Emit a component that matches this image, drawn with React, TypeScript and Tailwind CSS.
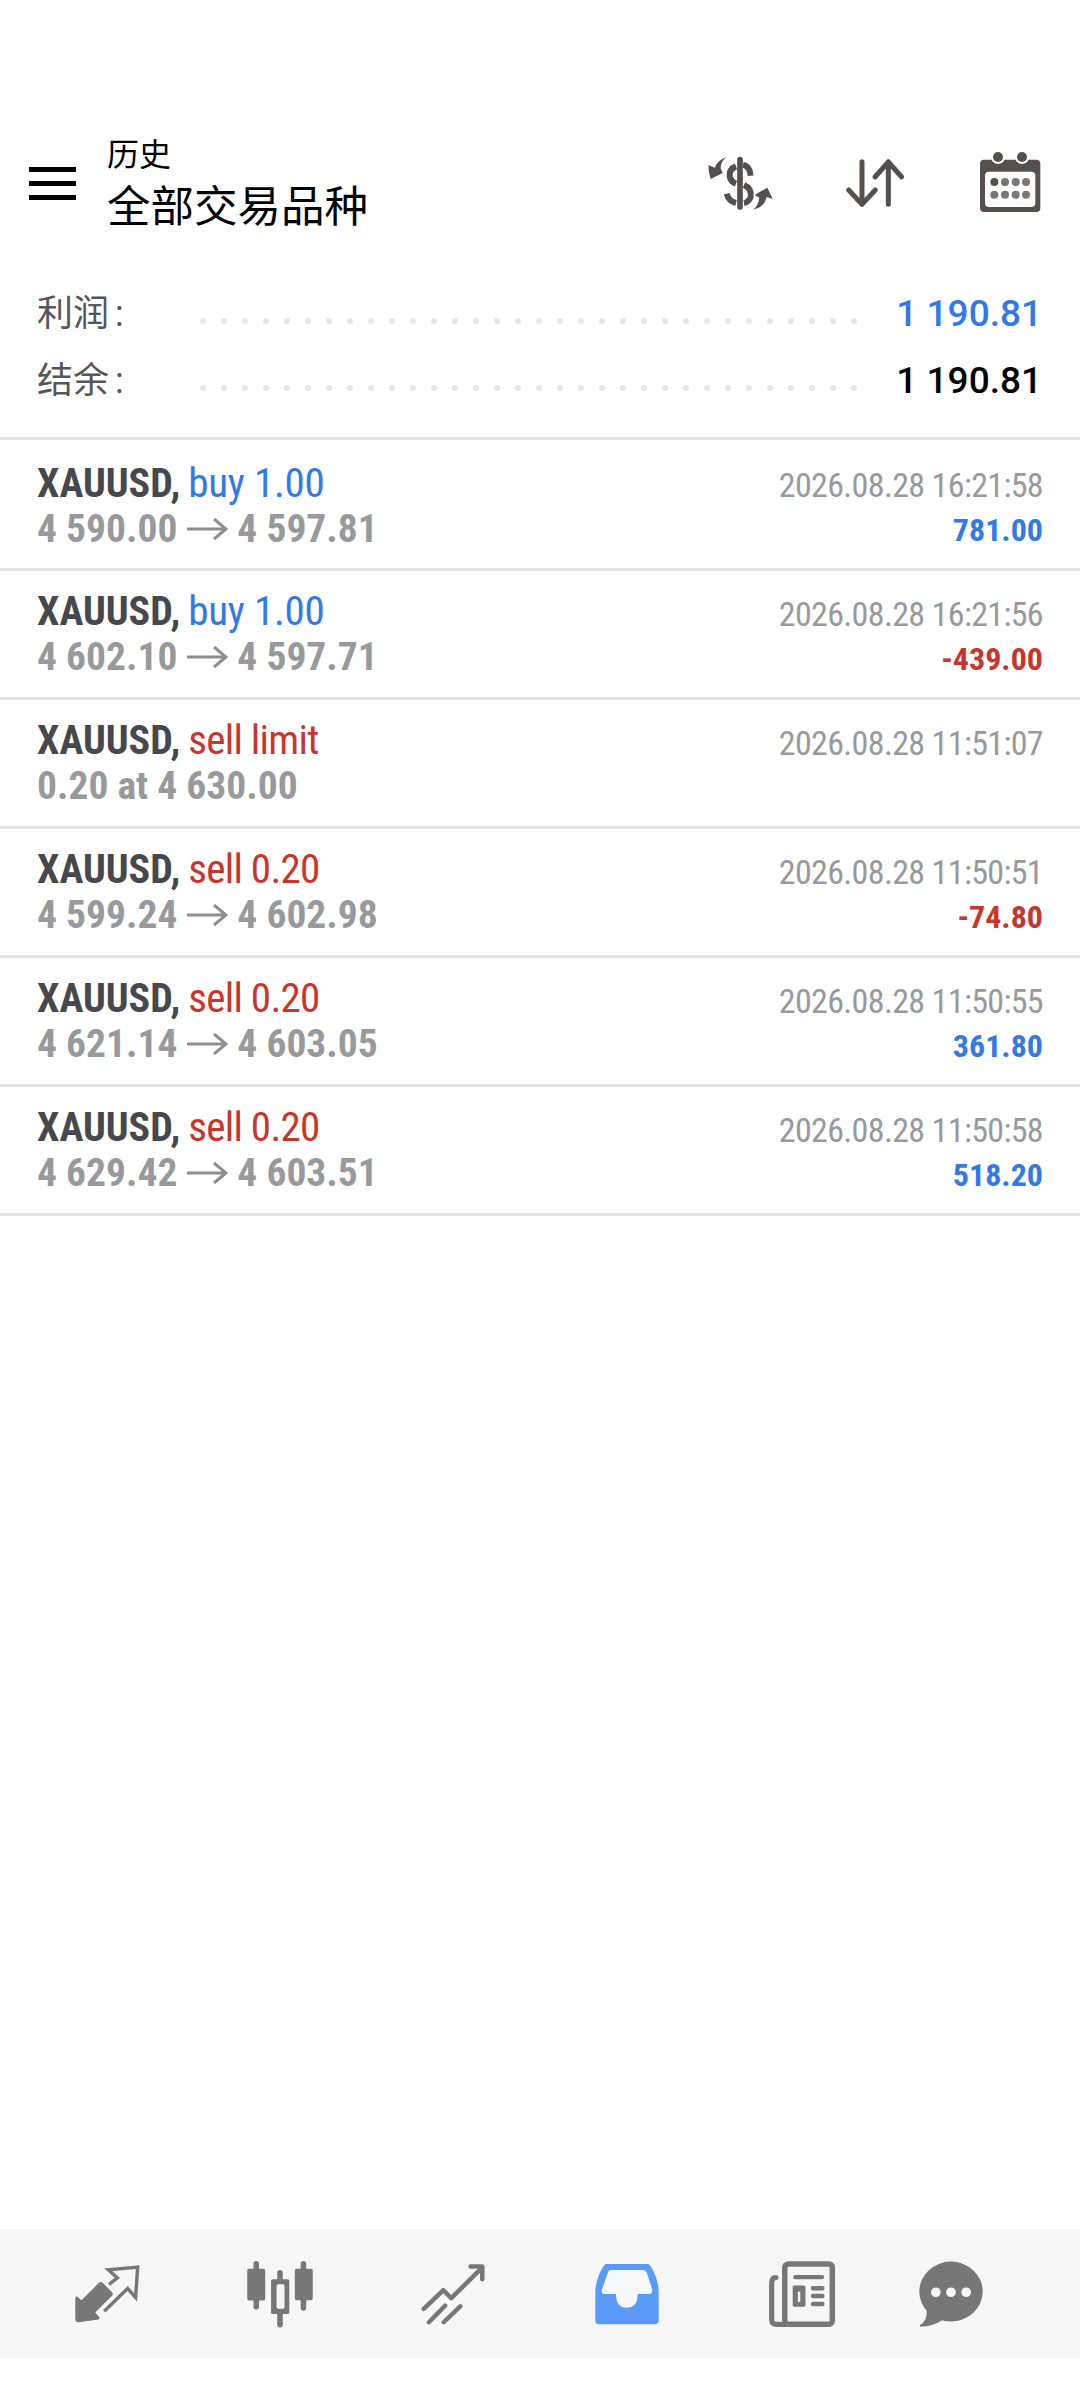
const rows = [
  { side: 'buy 1.00', blue: true, price: ['4 590.00', '4 597.81'], time: '2026.08.28 16:21:58', profit: '781.00', up: true },
  { side: 'buy 1.00', blue: true, price: ['4 602.10', '4 597.71'], time: '2026.08.28 16:21:56', profit: '-439.00', up: false },
  { side: 'sell limit', blue: false, price: ['0.20 at 4 630.00'], time: '2026.08.28 11:51:07', profit: '', up: false },
  { side: 'sell 0.20', blue: false, price: ['4 599.24', '4 602.98'], time: '2026.08.28 11:50:51', profit: '-74.80', up: false },
  { side: 'sell 0.20', blue: false, price: ['4 621.14', '4 603.05'], time: '2026.08.28 11:50:55', profit: '361.80', up: true },
  { side: 'sell 0.20', blue: false, price: ['4 629.42', '4 603.51'], time: '2026.08.28 11:50:58', profit: '518.20', up: true },
];

function DollarIcon() {
  return (
    <svg width="72" height="72" viewBox="130 82 216 216">
      <path d="M238 120V262" stroke="#55504d" strokeWidth="17" strokeLinecap="round" fill="none" />
      <path d="M270 168Q268 140 247 135M226 140Q205 148 207 170Q210 186 226 192M250 196Q274 206 270 232Q264 248 250 250M226 250Q204 244 198 222" stroke="#55504d" strokeWidth="18" fill="none" />
      <path d="M198 112Q180 124 180 146L186 160L150 178Q144 160 143 136L162 144Q172 120 198 112Z" fill="#55504d" />
      <path d="M278 270Q294 256 296 234L282 226L320 204L336 238L318 232Q312 262 278 270Z" fill="#55504d" />
    </svg>
  );
}

function ArrowsIcon() {
  return (
    <svg width="72" height="72" viewBox="538 82 216 216" fill="none" stroke="#55504d" strokeWidth="15" strokeLinecap="round" strokeLinejoin="round">
      <path d="M607 126V254M567 211L607 254L647 211" />
      <path d="M686 254V126M646 172L686 127L726 172" />
    </svg>
  );
}

function CalendarIcon() {
  return (
    <svg width="72" height="72" viewBox="942 82 216 216">
      <rect x="960" y="120" width="181" height="157" rx="12" fill="#55504d" />
      <rect x="975" y="156" width="151" height="106" rx="12" fill="#fff" />
      <circle cx="1014" cy="112" r="21" fill="#fff" />
      <circle cx="1086" cy="112" r="21" fill="#fff" />
      <circle cx="1014" cy="112" r="15" fill="#55504d" />
      <circle cx="1086" cy="112" r="15" fill="#55504d" />
      {[187, 225].map((y) =>
        [1003, 1035, 1067, 1098].map((x) => (
          <circle key={`${x}-${y}`} cx={x} cy={y} r="12" fill={x === 1003 && y === 187 ? '#55504d' : '#777'} />
        )),
      )}
    </svg>
  );
}

function TradeIcon() {
  return (
    <svg width="72" height="72" viewBox="207.5 145.5 209 209">
      <path d="M220 262L224 256L238 268L288 218Q294 212 300 218L326 244Q332 250 326 256L278 304L291 319L288 324L230 332Q220 333 220 322Z" fill="#777" />
      <path d="M318 222L342 203L316 180L401 172L395 260L372 234L304 300" fill="none" stroke="#777" strokeWidth="10" />
    </svg>
  );
}

function CandlesIcon() {
  return (
    <svg width="72" height="72" viewBox="708.5 143.5 209 209" fill="#777">
      <rect x="736" y="152" width="16" height="141" rx="8" />
      <rect x="718" y="175" width="52" height="92" rx="5" />
      <rect x="805" y="178" width="16" height="167" rx="8" />
      <rect x="787" y="205" width="53" height="101" rx="5" />
      <rect x="803" y="220" width="23" height="71" rx="5" fill="#f6f6f6" />
      <rect x="873" y="152" width="16" height="145" rx="8" />
      <rect x="856" y="175" width="52" height="91" rx="5" />
    </svg>
  );
}

function ChartIcon() {
  return (
    <svg width="72" height="72" viewBox="1210.5 140.5 209 209" fill="none" stroke="#777" strokeWidth="13" strokeLinecap="round" strokeLinejoin="round">
      <path d="M1230 288L1287 234L1310 257L1398 170M1366 165H1400V202M1245 327L1292 279M1288 327L1336 281" />
    </svg>
  );
}

function InboxIcon() {
  return (
    <svg width="72" height="72" viewBox="148.5 140.5 209 209">
      <path d="M192 158H314Q320 160 324 168Q345 205 345 240V322Q345 333 334 333H172Q161 333 161 322V240Q161 205 182 168Q186 160 192 158Z" fill="#5b9bf8" />
      <path d="M205 175H300Q308 176 311 184L326 232Q327 245 318 245H284Q284 285 252 285Q221 285 221 245H188Q178 245 180 232L197 184Q199 176 205 175Z" fill="#f6f7f8" />
    </svg>
  );
}

function NewsIcon() {
  return (
    <svg width="72" height="72" viewBox="655.5 140.5 209 209" fill="none" stroke="#777" strokeLinecap="round">
      <path d="M684 197Q672 197 672 212V318Q672 333 687 333H712" strokeWidth="15" />
      <rect x="710" y="158" width="138" height="175" rx="10" strokeWidth="16" />
      <path d="M741 196H818M792 228H819M792 251H819M792 274H819" strokeWidth="13" />
      <rect x="733" y="220" width="37" height="62" rx="5" fill="#777" stroke="none" />
      <rect x="748" y="238" width="7" height="30" fill="#f6f7f8" stroke="none" />
    </svg>
  );
}

function ChatIcon() {
  return (
    <svg width="72" height="72" viewBox="1088.5 140.5 209 209">
      <ellipse cx="1193" cy="238" rx="92" ry="87" fill="#777" />
      <path d="M1122 292Q1126 322 1102 336L1104 340Q1140 340 1170 320Z" fill="#777" />
      <circle cx="1149" cy="240" r="14" fill="#f6f7f8" />
      <circle cx="1193" cy="240" r="14" fill="#f6f7f8" />
      <circle cx="1237" cy="240" r="14" fill="#f6f7f8" />
    </svg>
  );
}

function Dots() {
  return (
    <div className="mt-[29px] flex gap-[15px]">
      {Array.from({ length: 32 }).map((_, i) => (
        <span key={i} className="w-[6px] h-[6px] rounded-full bg-[#e6e6e6]" />
      ))}
    </div>
  );
}

export default function App() {
  return (
    <div className="w-[1080px] h-[2400px] bg-white flex flex-col font-['Roboto','Noto_Sans_CJK_SC',sans-serif]">
      {/* Header */}
      <div className="h-[128px] mt-[128px] flex items-center shrink-0">
        <div className="ml-[29px] mb-[18px] w-[47px] flex flex-col gap-[9px] shrink-0">
          <span className="h-[5px] bg-black" />
          <span className="h-[5px] bg-black" />
          <span className="h-[5px] bg-black" />
        </div>
        <div className="ml-[31px] mb-[11px] flex flex-col text-black">
          <span className="text-[32px] leading-[40px]">历史</span>
          <span className="mt-[3px] text-[43.5px] leading-[60px]">全部交易品种</span>
        </div>
        <div className="ml-auto mr-[34.5px] mb-[19px] flex">
          <div className="mr-[62.5px]"><DollarIcon /></div>
          <div className="mr-[63px]"><ArrowsIcon /></div>
          <CalendarIcon />
        </div>
      </div>

      {/* Summary */}
      <div className="h-[184px] pt-[33px] shrink-0 border-b-[3px] border-[#e4e4e4]">
        {[
          { label: '利润 :', color: 'text-[#3279e8]' },
          { label: '结余 :', color: 'text-black' },
        ].map((item) => (
          <div key={item.label} className="h-[67px] flex pl-[37px] pr-[38px] text-[36px] leading-[50px]">
            <span className="w-[162.5px] shrink-0 text-[#55565a] [word-spacing:-3px]">{item.label}</span>
            <Dots />
            <span className={`ml-auto font-medium text-[37px] ${item.color}`}>1 190.81</span>
          </div>
        ))}
      </div>

      {/* Deals */}
      {rows.map((row, i) => (
        <div key={i} className={`${i === 0 ? 'h-[131px] pt-[20px]' : 'h-[129px] pt-[17px]'} pl-[37px] pr-[37px] flex justify-between shrink-0 border-b-[3px] border-[#e4e4e4]`}>
          <div className="flex flex-col">
            <div className="text-[40px] leading-[46px] whitespace-nowrap [font-stretch:75%]">
              <span className="font-bold text-[#47484d]">XAUUSD,</span>
              <span className={`ml-[8px] text-[41px] ${row.blue ? 'tracking-[-0.2px] text-[#3279e8]' : 'tracking-[-0.7px] text-[#c8352d]'}`}>{row.side}</span>
            </div>
            <div className="text-[39.5px] leading-[43px] font-bold text-[#98999c] whitespace-nowrap flex items-center [font-stretch:75%]">
              <span>{row.price[0]}</span>
              {row.price[1] && (
                <>
                  <svg width="41" height="24" viewBox="0 0 41 24" className="ml-[10px] mr-[9px]" fill="none" stroke="#8e8e90" strokeWidth="3">
                    <path d="M0 12H39M27 2L39 12L27 22" />
                  </svg>
                  <span>{row.price[1]}</span>
                </>
              )}
            </div>
          </div>
          <div className={`flex flex-col items-end ${i === 0 ? 'mt-[2px]' : 'mt-[3px]'}`}>
            <span className="text-[34px] leading-[46px] tracking-[-0.65px] text-[#98999c] whitespace-nowrap [font-stretch:75%]">{row.time}</span>
            <span className={`text-[32px] leading-[44px] font-bold whitespace-nowrap [font-stretch:75%] ${row.up ? 'text-[#3279e8]' : 'text-[#c8352d]'}`}>{row.profit}</span>
          </div>
        </div>
      ))}

      <div className="flex-1" />

      {/* Bottom nav */}
      <div className="h-[129px] mb-[42px] bg-[#f6f6f7] flex items-center shrink-0">
        <div className="ml-[71px]"><TradeIcon /></div>
        <div className="ml-[101px]"><CandlesIcon /></div>
        <div className="ml-[101px]"><ChartIcon /></div>
        <div className="ml-[102px]"><InboxIcon /></div>
        <div className="ml-[103px]"><NewsIcon /></div>
        <div className="ml-[77px]"><ChatIcon /></div>
      </div>
    </div>
  );
}
